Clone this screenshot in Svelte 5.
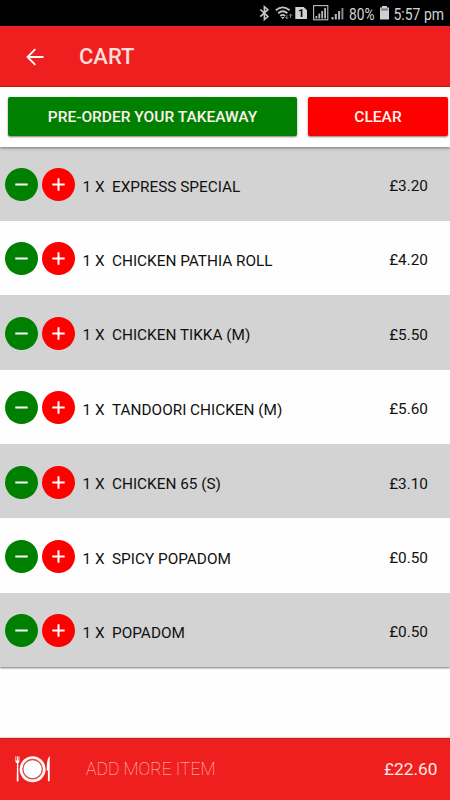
<script lang="ts">
  type CartItem = { name: string; qty: number; price: number };

  let items: CartItem[] = $state([
    { name: 'EXPRESS SPECIAL', qty: 1, price: 3.2 },
    { name: 'CHICKEN PATHIA ROLL', qty: 1, price: 4.2 },
    { name: 'CHICKEN TIKKA (M)', qty: 1, price: 5.5 },
    { name: 'TANDOORI CHICKEN (M)', qty: 1, price: 5.6 },
    { name: 'CHICKEN 65 (S)', qty: 1, price: 3.1 },
    { name: 'SPICY POPADOM', qty: 1, price: 0.5 },
    { name: 'POPADOM', qty: 1, price: 0.5 }
  ]);

  let total = $derived(items.reduce((sum, item) => sum + item.qty * item.price, 0));

  function formatPrice(value: number) {
    return '£' + value.toFixed(2);
  }

  function removeOne(item: CartItem) {
    item.qty -= 1;
    items = items.filter((i) => i.qty > 0);
  }

  function clearCart() {
    items = [];
  }
</script>

<div class="screen">
  <div class="status-bar">
    <svg width="200" height="26" viewBox="250 0 200 26">
      <!-- bluetooth -->
      <path d="M260.3 9.5l7.6 7-3.5 3V6.7l3.5 3-7.6 7" fill="none" stroke="#c8c8c8" stroke-width="1.6" />
      <!-- wifi -->
      <g fill="none" stroke="#c0c0c0" stroke-width="1.8">
        <path d="M275.8 10.3q6.9-5.800 13.800 0" />
        <path d="M278.2 13.300q4.600-4 9.200 0" />
        <path d="M280.300 16q2.400-2.200 4.800 0" />
      </g>
      <path d="M281 17h3.600l-1.800 2.200z" fill="#c0c0c0" />
      <path d="M285.400 17.200l1.400 1.600 1.400-1.600M286.800 15v3.800M290.600 18v-4M289.200 15.600l1.400-1.600 1.400 1.600" fill="none" stroke="#888" stroke-width="1" />
      <!-- sim card -->
      <path d="M295.300 7h8.400l3.300 3.200v8.800h-11.700z" fill="#d2d2d2" />
      <text x="298" y="17" font-size="11" font-weight="700" fill="#000">1</text>
      <!-- signal -->
      <rect x="313.600" y="5.600" width="14.200" height="14.200" fill="none" stroke="#c0c0c0" stroke-width="1.100" />
      <g fill="#b8b8b8">
        <path d="M315.500 16h1.800v2.500h-1.800zM318.400 13.500h1.800v5h-1.800zM321.300 11h1.800v7.500h-1.800zM324.200 8h1.800v10.500h-1.800z" />
        <path d="M331.500 17h2v2.500h-2zM334.800 14h2v5.500h-2zM338.100 11h2v8.500h-2z" />
        <path d="M341.400 8h2v11.500h-2z" fill="#888" />
      </g>
      <text x="349" y="19.500" font-size="16" textLength="25.500" lengthAdjust="spacingAndGlyphs" fill="#d2d2d2">80%</text>
      <!-- battery -->
      <path d="M382 6h5v1.500h2v12h-9v-12h2z" fill="#d0d0d0" />
      <path d="M381 8.500h7v2h-7z" fill="#777" />
      <text x="393.500" y="19.500" font-size="16" textLength="50.500" lengthAdjust="spacingAndGlyphs" fill="#d2d2d2">5:57 pm</text>
    </svg>
  </div>

  <header class="toolbar">
    <button class="back" aria-label="Back">
      <svg width="18" height="18" viewBox="0 0 18 18">
        <path d="M17.5 9H2M9.3 1.2L1.5 9l7.8 7.8" fill="none" stroke="#fff" stroke-width="1.8" />
      </svg>
    </button>
    <h1>CART</h1>
  </header>

  <div class="actions">
    <button class="btn preorder">PRE-ORDER YOUR TAKEAWAY</button>
    <button class="btn clear" onclick={clearCart}>CLEAR</button>
  </div>

  <ul class="items">
    {#each items as item (item.name)}
      <li class="item">
        <button class="round minus" aria-label="Remove one" onclick={() => removeOne(item)}>
          <svg width="13" height="13" viewBox="0 0 13 13"><path d="M.3 6.5h12.4" stroke="#fff" stroke-width="2" /></svg>
        </button>
        <button class="round plus" aria-label="Add one" onclick={() => (item.qty += 1)}>
          <svg width="13" height="13" viewBox="0 0 13 13"><path d="M.3 6.5h12.4M6.5.3v12.4" stroke="#fff" stroke-width="2" /></svg>
        </button>
        <span class="qty">{item.qty} X</span>
        <span class="name">{item.name}</span>
        <span class="price">{formatPrice(item.price)}</span>
      </li>
    {/each}
  </ul>

  <footer class="bottom">
    <svg class="plate" width="36" height="28" viewBox="0 0 36 28">
      <circle cx="17.6" cy="14.2" r="13" fill="#fff" />
      <circle cx="17.6" cy="14.2" r="9.7" fill="none" stroke="#e0443e" stroke-width="1.3" />
      <path d="M.4 1.2h.9v4.200h.7V1.200h.8v4.200h.7V1.200h.9v5q0 1.300-1.200 2l.3 17.800q-.8 1.200-1.800 0L2 8.200Q.4 7.500.4 6.200z" fill="#fff" />
      <path d="M34.700 1q-3.200 3-3 14.500h1.200v10.300q.9 1.200 1.800 0z" fill="#fff" />
    </svg>
    <span class="add">ADD MORE ITEM</span>
    <span class="total">{formatPrice(total)}</span>
  </footer>
</div>

<style>
:global(body) {
  margin: 0;
  background: #fff;
}
.screen {
  width: 450px;
  height: 800px;
  display: flex;
  flex-direction: column;
  overflow: hidden;
  background: #fefefe;
  font-family: Roboto, 'Liberation Sans', sans-serif;
}
button {
  border: none;
  padding: 0;
  font-family: inherit;
  cursor: pointer;
}
svg {
  display: block;
}
.status-bar {
  height: 26px;
  flex-shrink: 0;
  display: flex;
  justify-content: flex-end;
  background: #000;
}
.toolbar {
  height: 61px;
  flex-shrink: 0;
  box-sizing: border-box;
  display: flex;
  align-items: center;
  padding-left: 26px;
  background: #ef1f1f;
  border-bottom: 1px solid #cb1c1c;
}
.back {
  margin-top: 1px;
  background: none;
}
h1 {
  margin: 1px 0 0 35px;
  font-size: 22px;
  font-weight: 500;
  color: #ffdcd9;
}
.actions {
  position: relative;
  z-index: 1;
  height: 60px;
  flex-shrink: 0;
  box-sizing: border-box;
  display: flex;
  gap: 11px;
  padding: 10px 2px 0 8px;
  background: #fefefe;
  box-shadow: 0 1px 3px rgba(0, 0, 0, 0.45);
}
.btn {
  height: 39px;
  border-radius: 2px;
  font-size: 15.5px;
  font-weight: 500;
  color: #fff2ee;
  box-shadow: 0 1px 2px rgba(0, 0, 0, 0.5);
}
.preorder {
  width: 289px;
  background: #008000;
}
.clear {
  flex: 1;
  background: #fe0000;
}
.items {
  margin: 0;
  padding: 0;
  list-style: none;
  box-shadow: 0 1px 2px rgba(0, 0, 0, 0.55);
}
.item {
  height: 74.4px;
  box-sizing: border-box;
  display: flex;
  align-items: center;
  padding: 2px 22px 0 5.3px;
  background: #fefefe;
  font-size: 15.35px;
  color: #111;
}
.item:first-child {
  height: 73.8px;
}
.item:nth-child(odd) {
  background: #d3d3d3;
}
.round {
  width: 33px;
  height: 33px;
  flex-shrink: 0;
  display: flex;
  align-items: center;
  justify-content: center;
  border-radius: 50%;
}
.minus {
  background: #008000;
  margin-right: 3.7px;
}
.plus {
  background: #fe0000;
  margin-right: 7.5px;
}
.qty {
  width: 29.5px;
  margin-top: 4px;
}
.name {
  flex: 1;
  margin-top: 4px;
}
.price {
  margin-top: 3px;
}
.bottom {
  height: 62px;
  flex-shrink: 0;
  margin-top: auto;
  box-sizing: border-box;
  display: flex;
  align-items: center;
  padding: 0 12.5px 0 15px;
  background: #ef1f1f;
  border-top: 1px solid #cb1c1c;
  box-shadow: 0 0 2px rgba(0, 0, 0, 0.4);
}
.plate {
  margin-bottom: 1px;
}
.add {
  flex: 1;
  margin: -2px 0 0 35px;
  font-size: 17.5px;
  font-weight: 100;
  color: #ffd0ca;
}
.total {
  margin-top: -2px;
  font-size: 17.3px;
  color: #ffe9e6;
}
</style>
